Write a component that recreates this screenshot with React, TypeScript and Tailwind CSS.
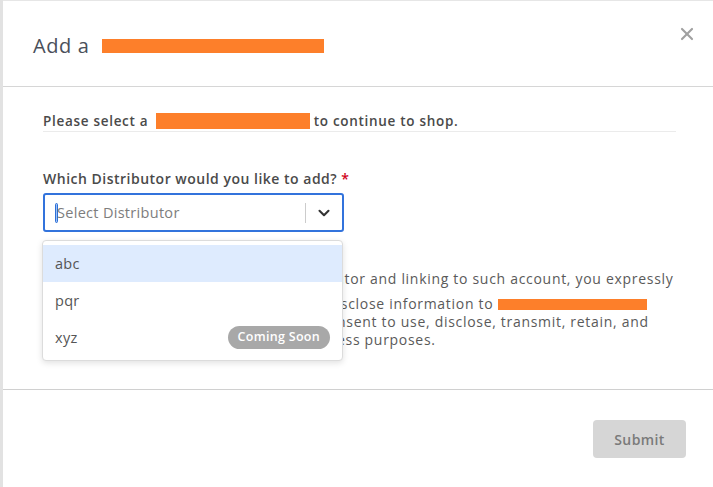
import { ChevronDown, X } from "lucide-react";

const options = [
  { label: "abc", active: true },
  { label: "pqr" },
  { label: "xyz", soon: true },
];

function Redacted({ className }: { className: string }) {
  return <span className={`inline-block bg-[#fd7f2a] align-middle ${className}`} />;
}

export default function App() {
  return (
    <div className="h-[487px] w-[713px] overflow-hidden bg-[#e2e2e2] pl-[3px] font-['Open_Sans',sans-serif]">
      <div className="flex h-full flex-col border-t border-[#e6e6e6] bg-white">
        {/* header */}
        <div className="flex h-[86px] shrink-0 items-start justify-between border-b border-[#d6d6d6] pl-[30px] pr-[16px]">
          <h2 className="mt-[30px] flex items-center text-[20px] tracking-[0.6px] text-[#4a4f5a]">
            Add a&nbsp;
            <Redacted className="ml-[7px] h-[14px] w-[222px]" />
          </h2>
          <button className="mt-[23px] text-[#a0a0a0]">
            <X size={20} strokeWidth={2.6} />
          </button>
        </div>

        {/* body */}
        <div className="relative h-[303px] shrink-0 border-b border-[#d0d0d0] pl-[40px] pr-[37px]">
          <p className="mt-[24px] flex items-center border-b border-[#ebebeb] pb-0 text-[13.5px] font-semibold tracking-[0.7px] text-[#4a4a4a]">
            Please select a&nbsp;
            <Redacted className="ml-[3px] h-[16px] w-[154px]" />
            &nbsp;to continue to shop.
          </p>

          <label className="mt-[36px] block text-[14px] font-semibold tracking-[0.5px] text-[#4a4a4a]">
            Which Distributor would you like to add? <span className="text-[#d0021b]">*</span>
          </label>

          <div className="mt-[4px] flex h-[39px] w-[301px] items-center rounded-[3px] border-2 border-[#3273dc] pl-[10px]">
            <span className="h-[20px] w-[3px] rounded-sm border border-[#2d6fd6] bg-[#9cc0f5]" />
            <span className="-ml-[1px] flex-1 text-[14.5px] tracking-[0.3px] text-[#7d7d7d]">Select Distributor</span>
            <span className="h-[20px] w-px bg-[#cccccc]" />
            <span className="flex w-[36px] justify-center text-[#333]">
              <ChevronDown size={18} strokeWidth={2.8} />
            </span>
          </div>

          <div className="mt-[38px] whitespace-nowrap text-[14px] leading-[18px] tracking-[0.7px] text-[#5a5a5a]">
            <p>By selecting &amp; adding a Preferred Distributor and linking to such account, you expressly</p>
            <p className="mt-[7px]">
              authorize us to access, collect, use and disclose information to{" "}
              <Redacted className="-mt-[3px] h-[11px] w-[149px]" />
            </p>
            <p>and you further grant us your express consent to use, disclose, transmit, retain, and</p>
            <p>keep such information for our own business purposes.</p>
          </div>

          {/* dropdown menu */}
          <div className="absolute left-[39px] top-[153px] w-[301px] rounded-[4px] border border-[#dcdcdc] bg-white py-[4px] shadow-[0_2px_6px_rgba(0,0,0,0.12)]">
            {options.map((o) => (
              <div
                key={o.label}
                className={`flex h-[37px] items-center justify-between pl-[12px] pr-[12px] text-[14.5px] tracking-[0.3px] text-[#555] ${
                  o.active ? "bg-[#deebfe]" : ""
                }`}
              >
                {o.label}
                {o.soon && (
                  <span className="rounded-full bg-[#a8a8a8] px-[10px] py-[2px] text-[12.5px] font-semibold tracking-[0.3px] text-white">
                    Coming Soon
                  </span>
                )}
              </div>
            ))}
          </div>
        </div>

        {/* footer */}
        <div className="flex justify-end pr-[27px] pt-[30px]">
          <button className="h-[38px] w-[93px] rounded-[4px] bg-[#d6d6d6] text-[14px] font-semibold tracking-[0.4px] text-[#7a7a7a]">
            Submit
          </button>
        </div>
      </div>
    </div>
  );
}
